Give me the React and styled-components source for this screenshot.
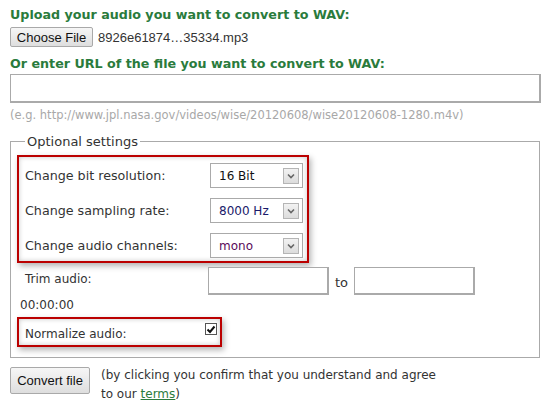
import React from "react";
import styled, { createGlobalStyle } from "styled-components";

const GlobalStyle = createGlobalStyle`
  body {
    margin: 0;
    background: #fff;
    font-family: "DejaVu Sans", Verdana, sans-serif;
    font-size: 13px;
    color: #333;
  }
`;

const Page = styled.div`
  padding: 7px 7px 0 10px;
  width: 531px;
`;

const Heading = styled.div`
  font-weight: bold;
  color: #2a7b3c;
  font-size: 12.7px;
  line-height: 16px;
  margin: ${(p) => p.$margin || "0"};
`;

const FileRow = styled.div`
  display: flex;
  align-items: center;
  gap: 5px;
  margin-top: 4px;
  font-family: "Liberation Sans", Arial, sans-serif;
  font-size: 13px;
`;

const NativeButton = styled.button`
  font-family: "Liberation Sans", Arial, sans-serif;
  font-size: 13px;
  color: #111;
  background: linear-gradient(#f6f6f6, #dedede);
  border: 1px solid #a9a9a9;
  border-radius: 2px;
  height: ${(p) => p.$h || 20}px;
  width: ${(p) => p.$w || 83}px;
  padding: 0;
`;

const TextInput = styled.input`
  display: block;
  box-sizing: border-box;
  width: ${(p) => p.$w || 531}px;
  height: ${(p) => p.$h || 29}px;
  border: 1px solid #aaa;
  border-width: 1px 2px 2px 1px;
  border-color: #aaa;
  margin: 0;
  padding: 0 4px;
`;

const Hint = styled.div`
  font-size: 11.5px;
  color: #a8a8a8;
  margin-top: 5px;
  line-height: 14px;
`;

const Fieldset = styled.fieldset`
  margin: 12px 0 0 0;
  padding: 6px 0 10px 6px;
  border: 1px solid #aaa;
  width: 522px;
`;

const Legend = styled.legend`
  padding: 0 2px;
  margin-left: 8px;
  font-size: 13px;
  color: #333;
`;

const RedBox = styled.div`
  border: 2px solid #bb0000;
  box-shadow: 2px 3px 6px rgba(0, 0, 0, 0.3), inset 0 0 5px rgba(0, 0, 0, 0.22);
  width: ${(p) => p.$w}px;
  box-sizing: border-box;
  padding: ${(p) => p.$pad};
  margin-top: ${(p) => p.$mt || 0}px;
  display: flex;
  flex-direction: column;
  gap: ${(p) => p.$gap || 0}px;
`;

const Row = styled.div`
  display: grid;
  grid-template-columns: ${(p) => p.$cols || "185px auto"};
  align-items: center;
  height: ${(p) => p.$h || 25}px;
`;

const Label = styled.span`
  color: #333;
  font-size: ${(p) => p.$size || 12.7}px;
`;

const Select = styled.div`
  box-sizing: border-box;
  width: 93px;
  height: 25px;
  border: 1px solid #aaa;
  display: flex;
  align-items: center;
  justify-content: space-between;
  padding: 0 3px 0 8px;
  font-size: 12px;
  color: ${(p) => p.$color || "#111"};
`;

const Arrow = styled.span`
  box-sizing: border-box;
  width: 16px;
  height: 16px;
  border: 1px solid #b5b5b5;
  background: linear-gradient(#f2f2f2, #dcdcdc);
  display: flex;
  align-items: center;
  justify-content: center;
`;

const TrimRow = styled.div`
  display: flex;
  align-items: center;
  margin: 4px 0 0 8px;
`;

const TrimLabel = styled.span`
  width: 183px;
  align-self: flex-start;
  padding-top: 5px;
  font-size: 12px;
`;

const To = styled.span`
  margin: 3px 6px 0 6px;
`;

const Time = styled.div`
  margin: 2px 0 0 3px;
  line-height: 16px;
  font-size: 12px;
`;

const Check = styled.span`
  box-sizing: border-box;
  width: 12px;
  height: 12px;
  border: 1px solid #555;
  background: #fff;
  display: flex;
  align-items: center;
  justify-content: center;
  align-self: start;
  margin-top: 0;
`;

const Bottom = styled.div`
  display: flex;
  align-items: flex-start;
  gap: 11px;
  margin-top: 9px;
`;

const Note = styled.div`
  line-height: 19px;
  margin-top: -1px;
  font-size: 12px;
  color: #333;
`;

const Terms = styled.a`
  color: #2a7b3c;
  text-decoration: underline;
`;

const Chevron = () => (
  <svg width="8" height="6" viewBox="0 0 8 6">
    <path d="M1 1.5 L4 4.5 L7 1.5" fill="none" stroke="#666" strokeWidth="1.6" />
  </svg>
);

const Select1 = ({ value, color }) => (
  <Select $color={color}>
    <span>{value}</span>
    <Arrow>
      <Chevron />
    </Arrow>
  </Select>
);

const App = () => {
  return (
    <Page>
      <GlobalStyle />
      <Heading>Upload your audio you want to convert to WAV:</Heading>
      <FileRow>
        <NativeButton>Choose File</NativeButton>
        <span>8926e61874…35334.mp3</span>
      </FileRow>
      <Heading $margin="9px 0 2px 0">Or enter URL of the file you want to convert to WAV:</Heading>
      <TextInput type="text" />
      <Hint>(e.g. http://www.jpl.nasa.gov/videos/wise/20120608/wise20120608-1280.m4v)</Hint>

      <Fieldset>
        <Legend>Optional settings</Legend>
        <RedBox $w={292} $pad="6px 4px 3px 6px" $gap={10}>
          <Row>
            <Label>Change bit resolution:</Label>
            <Select1 value="16 Bit" />
          </Row>
          <Row>
            <Label>Change sampling rate:</Label>
            <Select1 value="8000 Hz" color="#1a1a6a" />
          </Row>
          <Row>
            <Label>Change audio channels:</Label>
            <Select1 value="mono" color="#5a0a5a" />
          </Row>
        </RedBox>

        <TrimRow>
          <TrimLabel>Trim audio:</TrimLabel>
          <TextInput $w={121} $h={28} />
          <To>to</To>
          <TextInput $w={121} $h={28} />
        </TrimRow>
        <Time>00:00:00</Time>

        <RedBox $w={205} $pad="4px 4px 1px 6px" $mt={4}>
          <Row $cols="180px auto" $h={21}>
            <Label $size={12}>Normalize audio:</Label>
            <Check>
              <svg width="10" height="9" viewBox="0 0 10 9">
                <path d="M1.5 4.5 L4 7 L8.5 1.5" fill="none" stroke="#111" strokeWidth="2" />
              </svg>
            </Check>
          </Row>
        </RedBox>
      </Fieldset>

      <Bottom>
        <NativeButton $w={80} $h={27}>Convert file</NativeButton>
        <Note>
          (by clicking you confirm that you understand and agree
          <br />
          to our <Terms href="#">terms</Terms>)
        </Note>
      </Bottom>
    </Page>
  );
};

export default App;
